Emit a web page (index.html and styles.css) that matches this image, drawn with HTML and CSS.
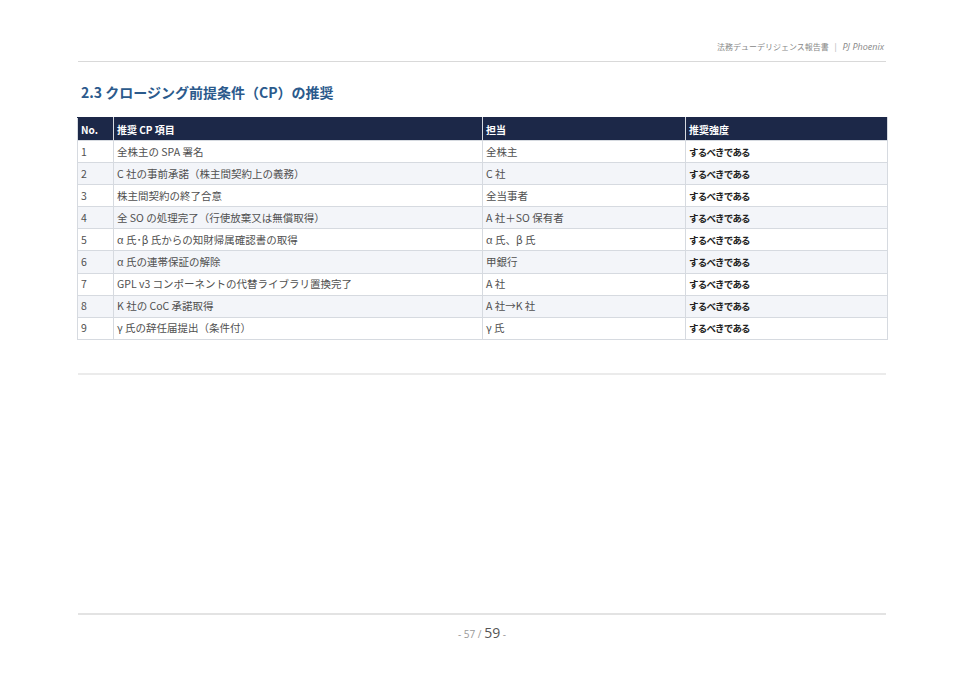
FILE: index.html
```html
<!DOCTYPE html>
<html lang="ja">
<head>
<meta charset="utf-8">
<link rel="stylesheet" href="styles.css">
</head>
<body>
<div class="page">
  <header class="top">
    <div class="doc-title">法務デューデリジェンス報告書 <span class="sep">|</span> <em>PJ Phoenix</em></div>
  </header>
  <h2 class="section">2.3 クロージング前提条件（CP）の推奨</h2>
  <table class="cp">
    <colgroup>
      <col class="c-no"><col class="c-item"><col class="c-who"><col class="c-lvl">
    </colgroup>
    <thead>
      <tr><th>No.</th><th>推奨 CP 項目</th><th>担当</th><th>推奨強度</th></tr>
    </thead>
    <tbody>
      <tr><td>1</td><td>全株主の SPA 署名</td><td>全株主</td><td class="b">するべきである</td></tr>
      <tr><td>2</td><td>C 社の事前承諾（株主間契約上の義務）</td><td>C 社</td><td class="b">するべきである</td></tr>
      <tr><td>3</td><td>株主間契約の終了合意</td><td>全当事者</td><td class="b">するべきである</td></tr>
      <tr><td>4</td><td>全 SO の処理完了（行使放棄又は無償取得）</td><td>A 社＋SO 保有者</td><td class="b">するべきである</td></tr>
      <tr><td>5</td><td>α 氏･β 氏からの知財帰属確認書の取得</td><td>α 氏、β 氏</td><td class="b">するべきである</td></tr>
      <tr><td>6</td><td>α 氏の連帯保証の解除</td><td>甲銀行</td><td class="b">するべきである</td></tr>
      <tr><td>7</td><td>GPL v3 コンポーネントの代替ライブラリ置換完了</td><td>A 社</td><td class="b">するべきである</td></tr>
      <tr><td>8</td><td>K 社の CoC 承諾取得</td><td>A 社→K 社</td><td class="b">するべきである</td></tr>
      <tr><td>9</td><td>γ 氏の辞任届提出（条件付）</td><td>γ 氏</td><td class="b">するべきである</td></tr>
    </tbody>
  </table>
  <hr class="rule">
  <footer class="foot">
    <div class="pageno">- 57 / <span class="total">59</span> -</div>
  </footer>
</div>
</body>
</html>
```
FILE: styles.css
```css
html, body {
  margin: 0;
  padding: 0;
  background: #ffffff;
}
body {
  font-family: "Noto Sans CJK JP", "Noto Sans", sans-serif;
  color: #444;
}
.page {
  width: 964px;
  height: 681px;
  box-sizing: border-box;
  padding: 0 77px 0 77px;
  display: flex;
  flex-direction: column;
}
.top {
  margin: 0 1px;
  padding-top: 41px;
  height: 20px;
  border-bottom: 1px solid #d9d9d9;
  display: flex;
  justify-content: flex-end;
}
.doc-title {
  font-size: 8px;
  line-height: 12px;
  color: #888;
  padding-right: 2px;
}
.doc-title .sep {
  margin: 0 4px;
  color: #aaa;
}
.doc-title em {
  font-family: "Open Sans", "Noto Sans", sans-serif;
  font-style: italic;
  font-size: 9px;
}
.section {
  margin: 20px 0 0 4px;
  font-size: 14px;
  line-height: 20px;
  font-weight: 700;
  color: #2b5a8c;
}
.cp {
  margin-top: 15px;
  width: 810px;
  border-collapse: collapse;
  table-layout: fixed;
  font-size: 10.5px;
}
.c-no { width: 36px; }
.c-item { width: 369px; }
.c-who { width: 203px; }
.c-lvl { width: 202px; }
.cp th {
  background: #1c2848;
  color: #fff;
  text-align: left;
  font-weight: 700;
  font-size: 10px;
  height: 22px;
  padding: 0 3px;
  border: 1px solid #d6dae0;
  border-top-color: #1c2848;
}
.cp td {
  height: 21.1px;
  padding: 0 3px;
  border: 1px solid #d6dae0;
  color: #505050;
  line-height: 14px;
}
.cp tbody tr:nth-child(even) td {
  background: #f3f5f9;
}
.cp td.b {
  font-weight: 700;
  font-size: 9.5px;
  letter-spacing: -0.8px;
  color: #222;
}
.rule {
  margin: 33px 1px 0 1px;
  border: 0;
  border-top: 2px solid #ebebeb;
  height: 0;
}
.foot {
  margin-top: auto;
  margin-left: 1px;
  margin-right: 1px;
  border-top: 2px solid #e3e3e3;
  height: 66px;
  display: flex;
  justify-content: center;
}
.pageno {
  margin-top: 8px;
  font-size: 10px;
  line-height: 20px;
  color: #999;
  font-family: "Open Sans", "Noto Sans", sans-serif;
}
.pageno .total {
  font-size: 14px;
  color: #555;
}
```
